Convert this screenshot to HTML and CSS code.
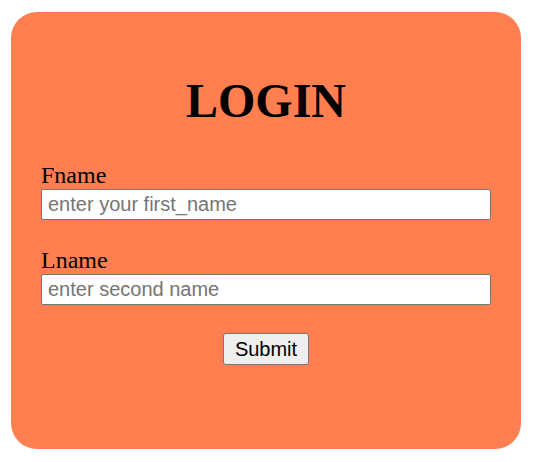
FILE: index.html
```html
<!DOCTYPE html>
<html>
<head>
<meta charset="utf-8">
<link rel="stylesheet" href="styles.css">
</head>
<body>
<div class="card">
  <h1 class="title">LOGIN</h1>
  <form class="form">
    <div class="field">
      <label class="label" for="fname">Fname</label>
      <input class="input" id="fname" type="text" placeholder="enter your first_name">
    </div>
    <div class="field">
      <label class="label" for="lname">Lname</label>
      <input class="input" id="lname" type="text" placeholder="enter second name">
    </div>
    <div class="actions">
      <button class="button" type="button">Submit</button>
    </div>
  </form>
</div>
</body>
</html>
```
FILE: styles.css
```css
html, body {
  margin: 0;
  padding: 0;
  background: #ffffff;
}
body {
  font-family: "Liberation Serif", "Times New Roman", serif;
  padding: 12px 22px 13px 11px;
}
.card {
  width: 510px;
  height: 437px;
  box-sizing: border-box;
  background: #ff7f50;
  border-radius: 26px;
  padding: 62px 30px 0 30px;
}
.title {
  margin: 0;
  font-size: 48px;
  line-height: 53px;
  font-weight: bold;
  text-align: center;
  color: #000;
}
.form {
  margin-top: 34px;
  display: flex;
  flex-direction: column;
}
.field {
  display: flex;
  flex-direction: column;
  margin-bottom: 26px;
}
.label {
  font-size: 24px;
  line-height: 28px;
  color: #000;
}
.input {
  box-sizing: border-box;
  width: 450px;
  height: 31px;
  margin: 0;
  padding: 3px 6px;
  font-family: "Liberation Sans", Arial, sans-serif;
  font-size: 20px;
  border: 1px solid #767676;
  border-radius: 2px;
  background: #fff;
  color: #000;
}
.input::placeholder {
  color: #757575;
}
.actions {
  display: flex;
  justify-content: center;
  margin-top: 2px;
}
.button {
  box-sizing: border-box;
  height: 32px;
  width: 86px;
  padding: 0;
  font-family: "Liberation Sans", Arial, sans-serif;
  font-size: 20px;
  color: #000;
  background: #efefef;
  border: 1px solid #767676;
  border-radius: 3px;
}
```
